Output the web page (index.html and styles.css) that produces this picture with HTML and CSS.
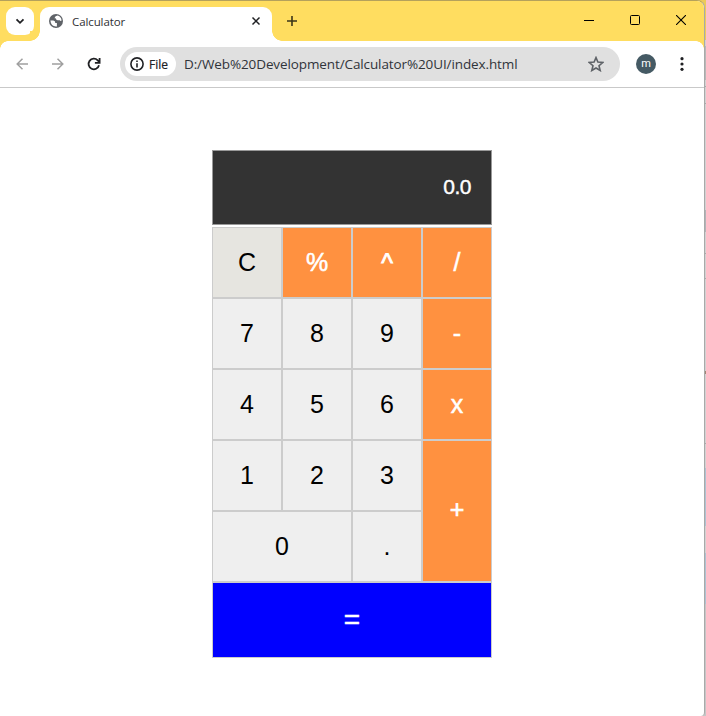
FILE: index.html
```html
<!DOCTYPE html>
<html lang="en">
<head>
<meta charset="utf-8">
<title>Calculator</title>
<link rel="stylesheet" href="styles.css">
</head>
<body>
<div class="window">
  <header class="titlebar">
    <button class="tab-search"><svg width="28" height="28" viewBox="0 0 28 28"><path d="M10.500 12.300l3.500 3.500 3.500-3.500" fill="none" stroke="#202124" stroke-width="1.800"/></svg></button>
    <div class="tab">
      <svg class="globe" width="14" height="14" viewBox="0 0 14 14"><circle cx="7" cy="7" r="7" fill="#5f6368"/><path d="M1.400 6.600h2.900q2.100.1 2 2.300h1.600v3.500Q2 13 1.400 6.600zM8.300 1.500q3.900.8 4.300 5-1 .9-1.800-.2H8.500Q6.700 5.900 6.700 4.200H5.500q.3-1.800 2.800-2.700z" fill="#fff"/></svg>
      <span class="tab-title">Calculator</span>
      <svg class="tab-close" width="10" height="10" viewBox="0 0 10 10"><path d="M1.500 1.500l7 7M8.500 1.500l-7 7" stroke="#202124" stroke-width="1.500"/></svg>
    </div>
    <svg class="new-tab" width="12" height="12" viewBox="0 0 12 12"><path d="M6 1v10M1 6h10" stroke="#3b3518" stroke-width="1.600"/></svg>
    <div class="window-controls">
      <svg width="10" height="10" viewBox="0 0 10 10"><path d="M0 5.500h10" stroke="#000"/></svg>
      <svg width="10" height="10" viewBox="0 0 10 10"><rect x=".5" y=".5" width="9" height="9" rx="1" fill="none" stroke="#000"/></svg>
      <svg width="10" height="10" viewBox="0 0 10 10"><path d="M0 0l10 10M10 0L0 10" stroke="#000" stroke-width="1.100"/></svg>
    </div>
  </header>
  <nav class="toolbar">
    <svg class="nav-icon" width="12" height="12" viewBox="0 0 12 12"><path d="M12 6H1M6.500.7L1.200 6l5.300 5.300" fill="none" stroke="#a0a0a0" stroke-width="1.500"/></svg>
    <svg class="nav-icon" width="12" height="12" viewBox="0 0 12 12"><path d="M0 6h11M5.500.7L10.800 6l-5.300 5.300" fill="none" stroke="#a0a0a0" stroke-width="1.500"/></svg>
    <svg class="reload" width="14" height="14" viewBox="0 0 14 14"><path d="M12 8.300A5.300 5.300 0 1 1 10.700 3.300L12.400 5M12.600.9v4.900H7.900" fill="none" stroke="#202124" stroke-width="1.800"/></svg>
    <div class="address">
      <span class="file-chip"><svg width="14" height="14" viewBox="0 0 14 14"><circle cx="7" cy="7" r="6.100" fill="none" stroke="#202124" stroke-width="1.600"/><path d="M7 3.400v1.600M7 6.200v4.300" stroke="#202124" stroke-width="1.600"/></svg><span>File</span></span>
      <span class="url">D:/Web%20Development/Calculator%20UI/index.html</span>
      <svg class="star" width="16" height="16" viewBox="0 0 16 16"><path d="M8 1.600l1.900 4.500 4.800.4-3.700 3.200 1.200 4.800L8 12l-4.200 2.500L5 9.700 1.300 6.500l4.800-.4z" fill="none" stroke="#5f6368" stroke-width="1.600"/></svg>
    </div>
    <span class="avatar">m</span>
    <svg class="menu" width="4" height="14" viewBox="0 0 4 14"><g fill="#202124"><circle cx="2" cy="1.700" r="1.600"/><circle cx="2" cy="7" r="1.600"/><circle cx="2" cy="12.300" r="1.600"/></g></svg>
  </nav>
  <main class="calculator">
    <div class="display">0.0</div>
    <div class="keys">
      <button class="clear">C</button><button class="op">%</button><button class="op caret">^</button><button class="op">/</button>
      <button>7</button><button>8</button><button>9</button><button class="op">-</button>
      <button>4</button><button>5</button><button>6</button><button class="op">x</button>
      <button>1</button><button>2</button><button>3</button><button class="op plus">+</button>
      <button class="zero">0</button><button>.</button>
      <button class="equals">=</button>
    </div>
  </main>
</div>
</body>
</html>
```

FILE: styles.css
```css
* { box-sizing: border-box; }
body {
  margin: 0;
  height: 716px;
  overflow: hidden;
  background: linear-gradient(#ecca58 0 40px, #d2d2d2 40px 46px, #b8b8b8 46px 80px, #d2d2d2 80px 86px, #aaa 86px 87px, #d2d2d2 87px 103px, #aaa 103px 104px, #d2d2d2 104px 210px, #b2b4b8 210px 232px, #d2d2d2 232px 253px, #aaa 253px 254px, #d2d2d2 254px 278px, #aaa 278px 279px, #d2d2d2 279px 371px, #a08674 371px 374px, #d2d2d2 374px 443px, #aaa 443px 444px, #d2d2d2 444px 468px, #adc3d3 468px 526px, #d2d2d2 526px 553px, #adc3d3 553px 604px, #c6c6c6 604px);
  font-family: "Open Sans", "Noto Sans", sans-serif;
}
button { margin: 0; padding: 0; border: 0; }
svg { display: block; flex: none; }
.window {
  width: 705px;
  height: 716px;
  background: #fff;
  border-top: 1px solid #b5a15b;
  border-right: 1px solid #a9a9a9;
  border-radius: 0 8px 4px 0;
  overflow: hidden;
}
.titlebar {
  display: flex;
  height: 40px;
  padding: 6px 18px 0 6px;
  background: #ffdd60;
}
.tab-search {
  width: 28px;
  height: 28px;
  border-radius: 9px;
  background: #fff;
}
.tab {
  position: relative;
  display: flex;
  align-items: center;
  width: 232px;
  height: 34px;
  margin-left: 6px;
  padding: 0 11px 6px 9px;
  background: #fff;
  border-radius: 9px 9px 0 0;
}
.tab::before, .tab::after {
  content: "";
  position: absolute;
  bottom: 0;
  width: 10px;
  height: 10px;
}
.tab::before { left: -10px; background: radial-gradient(circle at 0 0, #ffdd60 9.500px, #fff 10px); }
.tab::after { right: -10px; background: radial-gradient(circle at 100% 0, #ffdd60 9.500px, #fff 10px); }
.tab-title { margin-left: 9px; font-size: 11.500px; letter-spacing: -.1px; color: #303134; }
.tab-close { margin-left: auto; }
.new-tab { margin: 8px 0 0 14px; }
.window-controls { display: flex; gap: 36px; margin: 8px 0 0 auto; }
.toolbar {
  position: relative;
  display: flex;
  align-items: center;
  height: 47px;
  padding-left: 16px;
  border-bottom: 1px solid #c9c9c9;
  background: #fff;
}
.toolbar::before, .toolbar::after {
  content: "";
  position: absolute;
  top: 0;
  width: 8px;
  height: 8px;
}
.toolbar::before { left: 0; background: radial-gradient(circle at 100% 100%, #fff 7.500px, #ffdd60 8px); }
.toolbar::after { right: 0; background: radial-gradient(circle at 0 100%, #fff 7.500px, #ffdd60 8px); }
.nav-icon { margin-right: 24px; }
.reload { margin-left: -1px; }
.address {
  display: flex;
  align-items: center;
  width: 500px;
  height: 34px;
  margin-left: 19px;
  padding: 0 16px 0 5px;
  border-radius: 17px;
  background: #e0e0e0;
}
.file-chip {
  display: flex;
  align-items: center;
  gap: 5px;
  width: 51px;
  height: 24px;
  padding-left: 5px;
  border-radius: 12px;
  background: #fff;
  font-size: 12px;
  color: #202124;
  -webkit-text-stroke: .2px #202124;
}
.url { margin-left: 8px; font-size: 13.500px; letter-spacing: -.11px; color: #30343a; white-space: nowrap; }
.star { margin-left: auto; }
.avatar {
  width: 20px;
  height: 20px;
  margin-left: 16px;
  border-radius: 50%;
  background: #455a64;
  color: #fff;
  font: 400 11px/19px Roboto, sans-serif;
  text-align: center;
}
.menu { margin-left: 24px; }
.calculator { width: 280px; margin: 62px 0 0 212px; font-family: "Liberation Sans", Arial, sans-serif; }
.display {
  height: 75px;
  margin-bottom: 2px;
  padding-right: 20px;
  border: 1px solid #999;
  background: #333;
  color: #fff;
  font-size: 21px;
  letter-spacing: -.5px;
  line-height: 71px;
  text-align: right;
  -webkit-text-stroke: .4px #fff;
}
.keys { display: grid; grid-template-columns: repeat(4, 70px); grid-template-rows: repeat(5, 71px) 76px; }
.keys button {
  border: 1px solid #ccc;
  background: #efefef;
  color: #000;
  font: 25px "Liberation Sans", Arial, sans-serif;
}
.keys .clear { background: #e6e5e0; }
.keys .op { background: #ff9140; color: #fff; -webkit-text-stroke: .5px #fff; }
.keys .caret { padding-top: 2px; -webkit-text-stroke-width: .8px; }
.keys .plus { grid-row: 4 / 6; grid-column: 4; padding-bottom: 4px; -webkit-text-stroke-width: .6px; }
.keys .zero { grid-column: 1 / 3; }
.keys .equals { grid-column: 1 / 5; background: #00f; color: #fff; font-size: 28px; -webkit-text-stroke: .6px #fff; }
```
